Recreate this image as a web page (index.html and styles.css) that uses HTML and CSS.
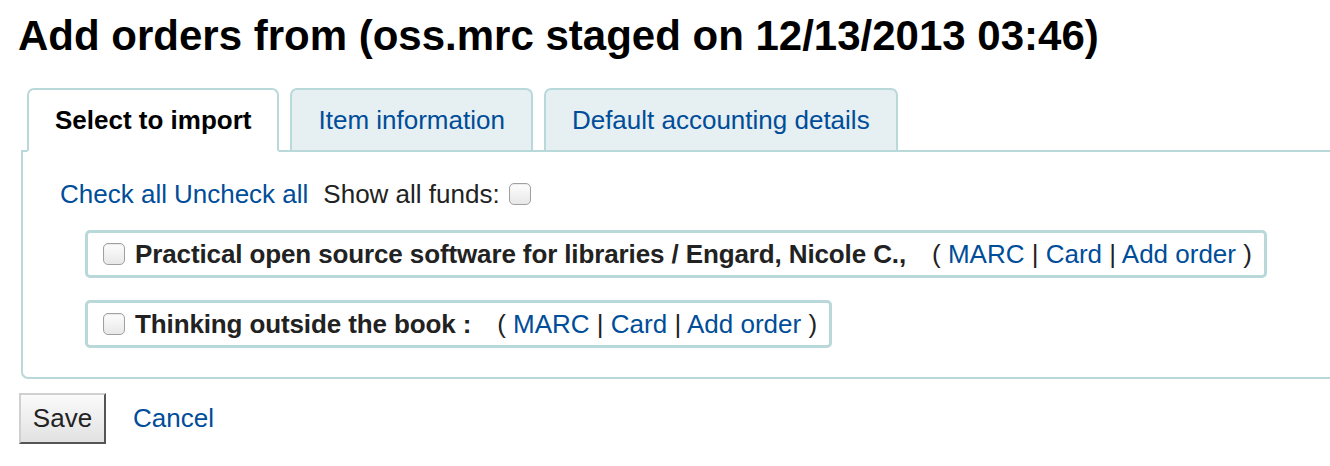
FILE: index.html
```html
<!DOCTYPE html>
<html>
<head>
<meta charset="utf-8">
<link rel="stylesheet" href="styles.css">
</head>
<body>
<h1 class="title">Add orders from (oss.mrc staged on 12/13/2013 03:46)</h1>
<div class="tabs">
  <ul class="tab-list">
    <li class="tab active">Select to import</li>
    <li class="tab"><a href="#">Item information</a></li>
    <li class="tab"><a href="#">Default accounting details</a></li>
  </ul>
  <div class="panel">
    <div class="toolbar">
      <a href="#">Check all</a>
      <a href="#">Uncheck all</a>
      <span class="funds">Show all funds: <span class="cb"></span></span>
    </div>
    <div class="records">
      <div class="record">
        <span class="cb"></span>
        <span class="rtitle">Practical open source software for libraries / Engard, Nicole C.,</span>
        <span class="links">( <a href="#">MARC</a> | <a href="#">Card</a> | <a href="#">Add order</a> )</span>
      </div>
      <div class="record">
        <span class="cb"></span>
        <span class="rtitle">Thinking outside the book :</span>
        <span class="links">( <a href="#">MARC</a> | <a href="#">Card</a> | <a href="#">Add order</a> )</span>
      </div>
    </div>
  </div>
</div>
<div class="actions">
  <button class="save">Save</button>
  <a href="#" class="cancel">Cancel</a>
</div>
</body>
</html>
```
FILE: styles.css
```css
* { box-sizing: border-box; }
body {
  margin: 0;
  font-family: "Liberation Sans", Arial, sans-serif;
  color: #222;
  background: #fff;
  font-size: 26px;
}
a { color: #004d99; text-decoration: none; }
.title {
  margin: 0;
  padding: 12px 0 0 18px;
  font-size: 42px;
  font-weight: bold;
  color: #000;
  line-height: 48px;
}
.tabs {
  margin: 28px 0 0 21px;
}
.tab-list {
  list-style: none;
  margin: 0;
  padding: 0 0 0 6px;
  display: flex;
  gap: 11px;
  position: relative;
  z-index: 1;
}
.tab {
  height: 64px;
  padding: 0 26px;
  display: flex;
  align-items: center;
  border: 2px solid #b9d8d9;
  border-radius: 7px 7px 0 0;
  background: #e6eff1;
  margin-bottom: -2px;
}
.tab.active {
  background: #fff;
  border-bottom-color: #fff;
  font-weight: bold;
  color: #000;
}
.panel {
  border: 2px solid #b9d8d9;
  border-right: none;
  border-radius: 0 0 0 7px;
  height: 229px;
  padding: 26px 0 0 37px;
}
.toolbar {
  display: flex;
  align-items: center;
  height: 32px;
}
.toolbar a { margin-right: 7px; }
.funds { margin-left: 8px; display: flex; align-items: center; gap: 9px; }
.cb {
  display: inline-block;
  width: 22px;
  height: 22px;
  border: 1px solid #a0a0a0;
  border-radius: 5px;
  background: linear-gradient(#fdfdfd, #e8e8e8);
  box-shadow: inset 0 1px 1px rgba(0,0,0,0.08);
}
.records {
  margin: 20px 0 0 25px;
  display: flex;
  flex-direction: column;
  align-items: flex-start;
  gap: 22px;
}
.record {
  display: flex;
  align-items: center;
  height: 48px;
  border: 3px solid #b9d8d9;
  border-radius: 5px;
  padding: 0 12px 0 15px;
}
.record .cb { margin-right: 10px; }
.rtitle { font-weight: bold; color: #222; letter-spacing: -0.12px; }
.links { margin-left: 26px; }
.actions {
  display: flex;
  align-items: center;
  margin: 14px 0 0 19px;
}
.save {
  width: 87px;
  height: 51px;
  font-family: "Liberation Sans", Arial, sans-serif;
  font-size: 26px;
  color: #222;
  background: linear-gradient(#fafafa, #e2e2e2);
  border: 2px solid;
  border-color: #d0d0d0 #555 #555 #d0d0d0;
  padding: 0;
}
.cancel { margin-left: 27px; }
```
